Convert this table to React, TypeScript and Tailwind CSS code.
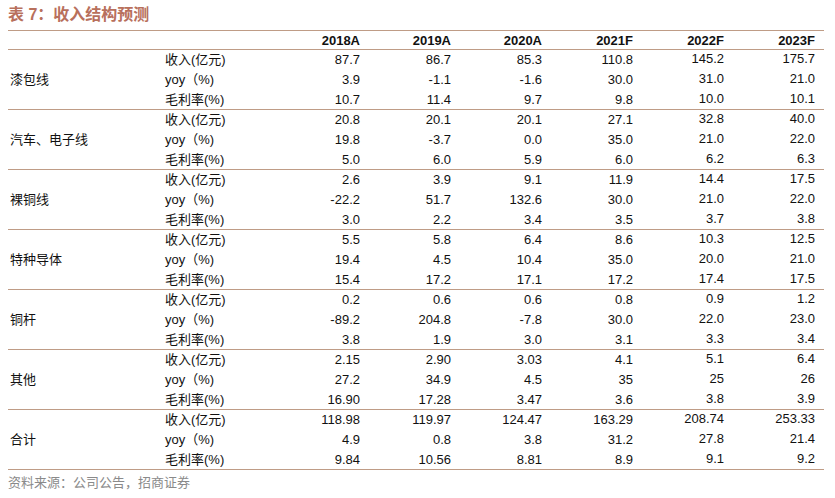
import React from "react";

const years = ["2018A", "2019A", "2020A", "2021F", "2022F", "2023F"];

const groups: { name: string; rows: string[][] }[] = [
  { name: "漆包线", rows: [["87.7", "86.7", "85.3", "110.8", "145.2", "175.7"], ["3.9", "-1.1", "-1.6", "30.0", "31.0", "21.0"], ["10.7", "11.4", "9.7", "9.8", "10.0", "10.1"]] },
  { name: "汽车、电子线", rows: [["20.8", "20.1", "20.1", "27.1", "32.8", "40.0"], ["19.8", "-3.7", "0.0", "35.0", "21.0", "22.0"], ["5.0", "6.0", "5.9", "6.0", "6.2", "6.3"]] },
  { name: "裸铜线", rows: [["2.6", "3.9", "9.1", "11.9", "14.4", "17.5"], ["-22.2", "51.7", "132.6", "30.0", "21.0", "22.0"], ["3.0", "2.2", "3.4", "3.5", "3.7", "3.8"]] },
  { name: "特种导体", rows: [["5.5", "5.8", "6.4", "8.6", "10.3", "12.5"], ["19.4", "4.5", "10.4", "35.0", "20.0", "21.0"], ["15.4", "17.2", "17.1", "17.2", "17.4", "17.5"]] },
  { name: "铜杆", rows: [["0.2", "0.6", "0.6", "0.8", "0.9", "1.2"], ["-89.2", "204.8", "-7.8", "30.0", "22.0", "23.0"], ["3.8", "1.9", "3.0", "3.1", "3.3", "3.4"]] },
  { name: "其他", rows: [["2.15", "2.90", "3.03", "4.1", "5.1", "6.4"], ["27.2", "34.9", "4.5", "35", "25", "26"], ["16.90", "17.28", "3.47", "3.6", "3.8", "3.9"]] },
  { name: "合计", rows: [["118.98", "119.97", "124.47", "163.29", "208.74", "253.33"], ["4.9", "0.8", "3.8", "31.2", "27.8", "21.4"], ["9.84", "10.56", "8.81", "8.9", "9.1", "9.2"]] },
];

const subs = ["收入(亿元)", "yoy（%)", "毛利率(%)"];

const cjk = "font-['Liberation_Sans','Noto_Sans_CJK_SC',sans-serif]";

export default function App() {
  return (
    <div className={`w-[835px] h-[498px] bg-white pl-[8px] text-[#111] ${cjk}`}>
      <div className="w-[816px]">
        <div className="h-[31px] border-b border-[#bf9c86] flex items-start pt-[5px]">
          <span className="text-[16px] font-bold text-[#b8705c] leading-[20px]">表 7：收入结构预测</span>
        </div>
        <div className="grid grid-cols-[155px_115px_repeat(6,91px)] h-[19px] border-b border-[#bf9c86] items-center text-[13px] font-bold">
          <div />
          <div />
          {years.map((y) => (
            <div key={y} className="text-right pr-[9px] leading-[18px] pt-[1px]">{y}</div>
          ))}
        </div>
        {groups.map((g) => (
          <div key={g.name} className="grid grid-cols-[155px_115px_repeat(6,91px)] h-[60px] border-b border-[#bf9c86] text-[13px]">
            <div className="flex items-center pl-[2px] pb-[1px]">{g.name}</div>
            <div className="flex flex-col pl-[2px]">
              {subs.map((s) => (
                <div key={s} className="h-[20px] leading-[20px] whitespace-nowrap">{s}</div>
              ))}
            </div>
            {years.map((y, ci) => (
              <div key={y} className={`flex flex-col ${ci >= 4 ? "-translate-y-[1px]" : ""}`}>
                {g.rows.map((r, ri) => (
                  <div key={ri} className="h-[20px] leading-[20px] text-right pr-[9px]">{r[ci]}</div>
                ))}
              </div>
            ))}
          </div>
        ))}
        <div className="pt-[4px] text-[13px] text-[#8a8a8a] leading-[18px]">资料来源：公司公告，招商证券</div>
      </div>
    </div>
  );
}
